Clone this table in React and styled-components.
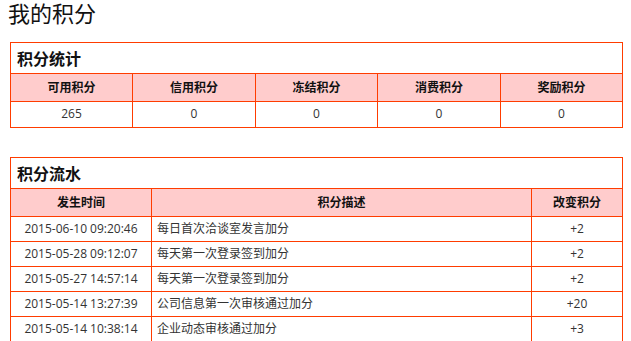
import React from 'react';
import styled, { createGlobalStyle } from 'styled-components';

const BORDER = '#ff3c00';

const GlobalStyle = createGlobalStyle`
  html, body {
    margin: 0;
    padding: 0;
    background: #fff;
  }
  body {
    font-family: "Open Sans", "Noto Sans CJK SC", sans-serif;
    font-size: 12px;
    color: #333;
  }
`;

const Page = styled.div`
  padding: 0 9px 0 10px;
  width: 613px;
`;

const PageTitle = styled.h1`
  margin: 0 0 18px -2px;
  font-size: 22px;
  line-height: 24px;
  font-weight: normal;
  color: #111;
  font-family: "Noto Sans CJK SC", sans-serif;
`;

const Box = styled.section`
  border: 1px solid ${BORDER};
  margin-bottom: 29px;
`;

const BoxTitle = styled.h2`
  margin: 0;
  height: 30px;
  line-height: 30px;
  padding-left: 6px;
  font-size: 16px;
  font-weight: bold;
  color: #111;
  border-bottom: 1px solid ${BORDER};
  font-family: "Noto Sans CJK SC", sans-serif;
`;

const Grid = styled.div`
  display: grid;
  grid-template-columns: ${(p) => p.$cols};
`;

const Cell = styled.div`
  box-sizing: border-box;
  height: ${(p) => (p.$head ? '28px' : '25px')};
  line-height: ${(p) => (p.$head ? '27px' : '24px')};
  border-right: 1px solid ${BORDER};
  border-bottom: 1px solid ${BORDER};
  text-align: ${(p) => p.$align || 'center'};
  padding-left: ${(p) => (p.$align === 'left' ? '5px' : '0')};
  background: ${(p) => (p.$head ? '#ffcccc' : '#fff')};
  font-weight: ${(p) => (p.$head ? 'bold' : 'normal')};
  color: ${(p) => (p.$head ? '#111' : '#333')};
  white-space: nowrap;
  overflow: hidden;

  &:nth-child(${(p) => p.$n}n) {
    border-right: none;
  }
  ${(p) => p.$last && 'border-bottom: none;'}
`;

const stats = [
  ['可用积分', '265'],
  ['信用积分', '0'],
  ['冻结积分', '0'],
  ['消费积分', '0'],
  ['奖励积分', '0'],
];

const flow = [
  ['2015-06-10 09:20:46', '每日首次洽谈室发言加分', '+2'],
  ['2015-05-28 09:12:07', '每天第一次登录签到加分', '+2'],
  ['2015-05-27 14:57:14', '每天第一次登录签到加分', '+2'],
  ['2015-05-14 13:27:39', '公司信息第一次审核通过加分', '+20'],
  ['2015-05-14 10:38:14', '企业动态审核通过加分', '+3'],
];

export default function App() {
  return (
    <>
      <GlobalStyle />
      <Page>
        <PageTitle>我的积分</PageTitle>

        <Box>
          <BoxTitle>积分统计</BoxTitle>
          <Grid $cols="122px 123px 122px 123px 121px">
            {stats.map(([label]) => (
              <Cell key={label} $head $n={5}>{label}</Cell>
            ))}
            {stats.map(([label, value]) => (
              <Cell key={label + 'v'} $n={5} $last>{value}</Cell>
            ))}
          </Grid>
        </Box>

        <Box>
          <BoxTitle>积分流水</BoxTitle>
          <Grid $cols="141px 380px 90px">
            <Cell $head $n={3}>发生时间</Cell>
            <Cell $head $n={3}>积分描述</Cell>
            <Cell $head $n={3}>改变积分</Cell>
            {flow.map(([time, desc, change], i) => {
              const last = i === flow.length - 1;
              return (
                <React.Fragment key={time + i}>
                  <Cell $n={3} $last={last}>{time}</Cell>
                  <Cell $n={3} $align="left" $last={last}>{desc}</Cell>
                  <Cell $n={3} $last={last}>{change}</Cell>
                </React.Fragment>
              );
            })}
          </Grid>
        </Box>
      </Page>
    </>
  );
}
